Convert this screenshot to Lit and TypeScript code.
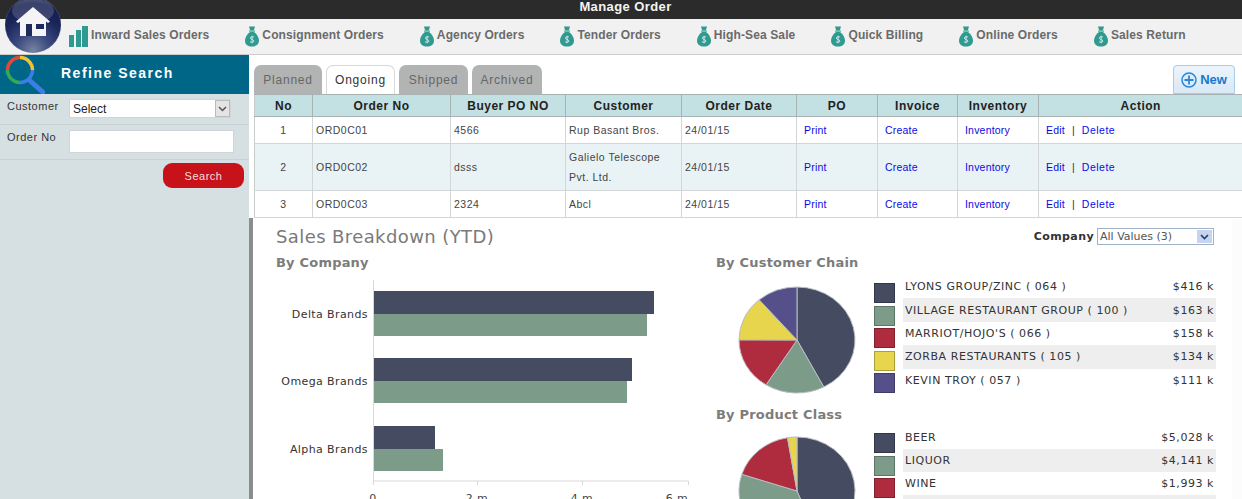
import { LitElement, html, css, svg } from "lit";
import { customElement } from "lit/decorators.js";

const COLORS = ["#454b60", "#7c9c89", "#ae2c3e", "#e8d54e", "#555089"];
const bag = html`<svg class="bag" viewBox="0 0 14 21" width="14" height="21"><path d="M4 0.5h6L8.8 4.5H5.2z" fill="#2f9a90"/><rect x="4" y="4.6" width="6" height="1" fill="#2f9a90"/><path d="M5 6C2 8 0 11.500 0 14.500 0 18.500 3 20.500 7 20.500S14 18.500 14 14.500C14 11.500 12 8 9 6z" fill="#2f9a90"/><path d="M9 11.200C8.200 10.500 5.500 10.400 5.400 12 5.300 13.700 8.900 13.300 8.900 15.100 8.900 16.600 6 16.600 5 15.700M7.100 9.800V17.200" fill="none" stroke="#e8f4f2" stroke-width=".8"/></svg>`;
const bars = html`<svg class="bars" viewBox="0 0 19 21" width="19" height="21"><rect x="0" y="9" width="5" height="12" fill="#2f9a90"/><rect x="7" y="4" width="5" height="17" fill="#2f9a90"/><rect x="13" y="0" width="6" height="21" fill="#2f9a90"/></svg>`;

function pie(values: number[], rx: number, ry: number) {
  const total = values.reduce((a, b) => a + b, 0);
  let acc = 0;
  const w = rx * 2 + 4, h = ry * 2 + 4, cx = rx + 2, cy = ry + 2;
  const slices = values.map((v, i) => {
    const a0 = (acc / total) * 2 * Math.PI;
    acc += v;
    const a1 = (acc / total) * 2 * Math.PI;
    const p = (a: number) => `${(cx + Math.sin(a) * rx).toFixed(2)} ${(cy - Math.cos(a) * ry).toFixed(2)}`;
    const large = a1 - a0 > Math.PI ? 1 : 0;
    return svg`<path d="M${cx} ${cy}L${p(a0)}A${rx} ${ry} 0 ${large} 1 ${p(a1)}Z" fill=${COLORS[i]} stroke="#b9bcc4" stroke-width="1"/>`;
  });
  return html`<svg class="pie" width=${w} height=${h} viewBox="0 0 ${w} ${h}">${slices}</svg>`;
}

@customElement("app-root")
export class AppRoot extends LitElement {
  static styles = css`
    :host { display: block; height: 499px; width: 1242px; overflow: hidden; position: relative; font-family: "Liberation Sans", Arial, sans-serif; background: #fff; color: #444; }
    .top { height: 19px; background: #2b2b2b; color: #f4f4f4; font-weight: bold; font-size: 13px; line-height: 13px; text-align: center; letter-spacing: .4px; padding-left: 9px; box-sizing: border-box; }
    .home { position: absolute; left: 5px; top: -3px; width: 56px; height: 56px; border-radius: 50%; background: radial-gradient(circle at 50% 95%, #77839f 0%, #3b4a80 28%, #1a2558 58%, #141e4e 78%, #5b6486 100%); box-shadow: inset 0 0 1px #8893b8; z-index: 2; overflow: hidden; }
    .home svg { display: block; }
    .nav { height: 36px; box-sizing: border-box; background: #f1f1f1; border-bottom: 1px solid #ccc; display: flex; align-items: center; gap: 36px; padding-left: 69px; }
    .nav-item { display: flex; align-items: center; gap: 3px; font-size: 12px; font-weight: bold; color: #6a6a6a; letter-spacing: .12px; white-space: nowrap; }
    .nav-item svg { display: block; flex: none; }
    .nav-item span { padding-bottom: 4px; }
    .body { display: flex; height: 444px; }
    .side { width: 249px; flex: none; background: #d6e0e2; }
    .side-head { height: 39px; background: #006687; display: flex; padding-left: 5px; gap: 6px; color: #fff; font-size: 14px; font-weight: bold; letter-spacing: 1.5px; }
    .side-head svg { display: block; flex: none; }
    .side-head span { margin-left: 10px; line-height: 36px; }
    .row { display: flex; border-bottom: 1px solid #c9d3d5; padding-left: 7px; font-size: 11px; color: #333; letter-spacing: .5px; }
    .row label { width: 62px; flex: none; margin-top: 1px; }
    .row.cust { height: 31px; box-sizing: border-box; padding-top: 5px; }
    .row.ord { height: 35px; box-sizing: border-box; padding-top: 5px; }
    .sel { width: 162px; height: 19px; box-sizing: border-box; background: #fff; border: 1px solid #d0d4d6; display: flex; align-items: center; justify-content: space-between; font-size: 12px; color: #222; letter-spacing: 0; padding-left: 3px; }
    .sel-btn { width: 15px; height: 17px; background: #e4e4e4; border: 1px solid #bbb; box-sizing: border-box; display: flex; align-items: center; justify-content: center; }
    .inp { width: 165px; height: 23px; box-sizing: border-box; background: #fff; border: 1px solid #d0d4d6; }
    .search-wrap { display: flex; justify-content: flex-end; padding: 3px 5px 0 0; }
    .search { width: 81px; height: 25px; border-radius: 9px; background: #c8121a; color: #f6dede; font-size: 11px; letter-spacing: .5px; display: flex; align-items: center; justify-content: center; }
    .main { flex: 1; min-width: 0; }
    .tools { padding: 10px 7px 0 5px; display: flex; align-items: flex-end; height: 39px; box-sizing: border-box; }
    .tabs { display: flex; gap: 4px; flex: 1; }
    .tab { width: 69px; height: 29px; box-sizing: border-box; background: #b2b4b4; color: #666; font-size: 12px; letter-spacing: .8px; border-radius: 7px 7px 0 0; display: flex; align-items: center; justify-content: center; }
    .tab:first-child { width: 68px; }
    .tab:last-child { width: 70px; }
    .tab.on { background: #fff; color: #333; border: 1px solid #d8d8d8; border-bottom: none; }
    .new { width: 62px; height: 29px; box-sizing: border-box; border: 1px solid #a9cbe6; border-radius: 4px 4px 0 0; background: linear-gradient(#ecf4fb, #d8e8f6); color: #1877d0; font-weight: bold; font-size: 13px; display: flex; align-items: center; justify-content: center; gap: 3px; }
    .tw { padding-left: 5px; }
    table { border-collapse: collapse; table-layout: fixed; width: 988px; font-size: 10.500px; letter-spacing: .5px; color: #444; }
    th { background: #c3e0e2; color: #222; font-size: 12px; height: 21px; padding: 0; border: 1px solid #a9b2b3; font-weight: bold; }
    td { border: 1px solid #d3d6d6; padding: 0 3px; height: 26px; background: #fff; white-space: nowrap; }
    tr.alt td { background: #e9f3f6; height: 46px; line-height: 20px; }
    th:first-child, td:first-child { border-left-color: #c8cccc; }
    th:last-child, td:last-child { border-right: none; }
    td.c { text-align: center; }
    td.l { padding-left: 7px; color: #0a0ae6; letter-spacing: .2px; }
    .pipe { color: #333; margin: 0 7px; }
    .del { letter-spacing: .5px; }
    .dash { height: 281px; border-left: 4px solid #8c8c8c; padding-left: 23px; overflow: hidden; box-shadow: inset -10px 0 0 #fcfcfc; font-family: "DejaVu Sans", Verdana, sans-serif; }
    .dash-head { display: flex; align-items: center; justify-content: space-between; height: 39px; padding: 0 28px 2px 0; box-sizing: border-box; }
    .dash-title { font-size: 18px; color: #7a7a7a; letter-spacing: .4px; }
    .filter { display: flex; align-items: center; gap: 3px; font-size: 11px; font-weight: bold; color: #333; letter-spacing: .4px; }
    .fsel { width: 117px; height: 17px; box-sizing: border-box; border: 1px solid #9fb2c8; display: flex; align-items: center; justify-content: space-between; font-weight: normal; color: #555; font-size: 11px; padding-left: 2px; letter-spacing: 0; }
    .fbtn { width: 15px; height: 13px; background: #c5d5ef; margin-right: 1px; display: flex; align-items: center; justify-content: center; }
    .cols { display: flex; }
    .left { width: 440px; flex: none; }
    h3 { margin: 0; font-size: 13px; letter-spacing: .2px; font-weight: bold; color: #7c7c7c; height: 14px; line-height: 12px; white-space: nowrap; }
    .chart { display: block; margin-top: 1px; }
    .chart text { font-family: "DejaVu Sans", Verdana, sans-serif; font-size: 11px; letter-spacing: .4px; fill: #333; }
    .chart text.t { text-anchor: middle; fill: #444; }
    .chart text.n { text-anchor: end; }
    .right { flex: 1; min-width: 0; padding-right: 26px; }
    .block { display: flex; height: 138px; box-sizing: border-box; padding-top: 4px; }
    .block .pie { flex: none; margin: 10px 17px 0 21px; }
    .block.two { padding-top: 3px; height: 150px; }
    .block.two .pie { margin-top: 9px; }
    .block.two .sw { padding-top: 7px; }
    .block.two .lg div { height: 23px; }
    .sw { flex: none; width: 21px; padding-top: 8px; margin-right: 8px; display: flex; flex-direction: column; gap: 2.500px; }
    .sw i { display: block; height: 20px; box-sizing: border-box; border: 1px solid rgba(0,0,0,.25); }
    .lg { flex: 1; }
    .lg div { height: 23.400px; display: flex; align-items: center; justify-content: space-between; font-size: 11px; letter-spacing: .55px; color: #333; padding: 0 2px; }
    .lg div:nth-child(even) { background: #eeeeee; }
  `;

  legend(items: [string, string][]) {
    return html`<div class="sw">${items.map((_, i) => html`<i style="background:${COLORS[i]}"></i>`)}</div>
      <div class="lg">${items.map(([a, b]) => html`<div><span>${a}</span><span>${b}</span></div>`)}</div>`;
  }

  render() {
    const rows = [
      ["1", "ORD0C01", "4566", html`Rup Basant Bros.`, ""],
      ["2", "ORD0C02", "dsss", html`Galielo Telescope<br />Pvt. Ltd.`, "alt"],
      ["3", "ORD0C03", "2324", html`Abcl`, ""],
    ];
    const bs: [number, number, string][] = [
      [291, 280, COLORS[0]], [314, 273, COLORS[1]],
      [358, 258, COLORS[0]], [381, 253, COLORS[1]],
      [426, 61, COLORS[0]], [449, 69, COLORS[1]],
    ];
    const cust: [string, string][] = [
      ["LYONS GROUP/ZINC ( 064 )", "$416 k"],
      ["VILLAGE RESTAURANT GROUP ( 100 )", "$163 k"],
      ["MARRIOT/HOJO'S ( 066 )", "$158 k"],
      ["ZORBA RESTAURANTS ( 105 )", "$134 k"],
      ["KEVIN TROY ( 057 )", "$111 k"],
    ];
    const prod: [string, string][] = [
      ["BEER", "$5,028 k"],
      ["LIQUOR", "$4,141 k"],
      ["WINE", "$1,993 k"],
      ["", ""],
    ];
    return html`
      <div class="top">Manage Order</div>
      <div class="home">
        <svg viewBox="0 0 56 56" width="56" height="56">
          <ellipse cx="28" cy="14" rx="21" ry="12" fill="#ffffff" opacity=".16"/>
          <path d="M28 10L45 24.500 43 26 41 24.500V39H15V24.500L13 26 11 24.500z" fill="#f4f4f6"/>
          <rect x="21" y="27" width="6" height="12" fill="#1d2a5a"/>
          <rect x="31" y="27" width="8" height="5" fill="#1d2a5a"/>
        </svg>
      </div>
      <div class="nav">
        <div class="nav-item">${bars}<span>Inward Sales Orders</span></div>
        ${["Consignment Orders", "Agency Orders", "Tender Orders", "High-Sea Sale", "Quick Billing", "Online Orders", "Sales Return"].map(
          (t) => html`<div class="nav-item">${bag}<span>${t}</span></div>`
        )}
      </div>
      <div class="body">
        <div class="side">
          <div class="side-head">
            <svg width="40" height="39" viewBox="0 0 40 39">
              <path d="M23 24L40 39" stroke="#3b7fe6" stroke-width="5"/>
              <g fill="none" stroke-width="3.500">
                <path d="M2.500 15A12.500 12.500 0 0 1 15 2.500" stroke="#dc4a3c"/>
                <path d="M15 2.500A12.500 12.500 0 0 1 27.500 15" stroke="#f2c230"/>
                <path d="M27.500 15A12.500 12.500 0 0 1 15 27.500" stroke="#3b7fe6"/>
                <path d="M15 27.500A12.500 12.500 0 0 1 2.500 15" stroke="#35a853"/>
              </g>
            </svg>
            <span>Refine Search</span>
          </div>
          <div class="row cust"><label>Customer</label>
            <div class="sel">Select<div class="sel-btn"><svg width="9" height="6" viewBox="0 0 9 6"><path d="M1 1L4.500 4.500 8 1" fill="none" stroke="#555" stroke-width="1.500"/></svg></div></div>
          </div>
          <div class="row ord"><label>Order No</label><div class="inp"></div></div>
          <div class="search-wrap"><div class="search">Search</div></div>
        </div>
        <div class="main">
          <div class="tools">
            <div class="tabs">
              <div class="tab">Planned</div>
              <div class="tab on">Ongoing</div>
              <div class="tab">Shipped</div>
              <div class="tab">Archived</div>
            </div>
            <div class="new">
              <svg width="16" height="16" viewBox="0 0 16 16"><circle cx="8" cy="8" r="7" fill="#dcebf8" stroke="#2a86d8" stroke-width="1.500"/><path d="M8 3.500V12.500M3.500 8H12.500" stroke="#2a86d8" stroke-width="1.800"/></svg>New
            </div>
          </div>
          <div class="tw">
            <table>
              <colgroup>
                ${[58, 138, 115, 116, 115, 81, 80, 81, 204].map((w) => html`<col style="width:${w}px" />`)}
              </colgroup>
              <thead><tr>
                ${["No", "Order No", "Buyer PO NO", "Customer", "Order Date", "PO", "Invoice", "Inventory", "Action"].map((h) => html`<th>${h}</th>`)}
              </tr></thead>
              <tbody>
                ${rows.map((r) => html`<tr class=${r[4] as string}>
                  <td class="c">${r[0]}</td><td>${r[1]}</td><td>${r[2]}</td><td>${r[3]}</td><td>24/01/15</td>
                  <td class="l">Print</td><td class="l">Create</td><td class="l">Inventory</td>
                  <td class="l">Edit<span class="pipe">|</span><span class="del">Delete</span></td>
                </tr>`)}
              </tbody>
            </table>
          </div>
          <div class="dash">
            <div class="dash-head">
              <div class="dash-title">Sales Breakdown (YTD)</div>
              <div class="filter">Company
                <div class="fsel">All Values (3)<div class="fbtn"><svg width="9" height="6" viewBox="0 0 9 6"><path d="M1 1L4.500 4.500 8 1" fill="none" stroke="#223a7a" stroke-width="1.600"/></svg></div></div>
              </div>
            </div>
            <div class="cols">
              <div class="left">
                <h3>By Company</h3>
                <svg class="chart" width="430" height="228" viewBox="276 272 430 228">
                  <path d="M373.500 280V481H688.500M373.500 481v4M477.500 481v4M582.500 481v4M688.500 481v4" fill="none" stroke="#d8d8d8"/>
                  ${bs.map(([y, w, c], i) => svg`<rect x="374" y=${y} width=${w} height=${i % 2 ? 22 : 23} fill=${c}/>`)}
                  <text class="n" x="368" y="318">Delta Brands</text>
                  <text class="n" x="368" y="385">Omega Brands</text>
                  <text class="n" x="368" y="453">Alpha Brands</text>
                  <text class="t" x="373" y="502">0</text>
                  <text class="t" x="477" y="502">2 m</text>
                  <text class="t" x="582" y="502">4 m</text>
                  <text class="t" x="677" y="502">6 m</text>
                </svg>
              </div>
              <div class="right">
                <h3>By Customer Chain</h3>
                <div class="block">${pie([416, 163, 158, 134, 111], 58, 53)}${this.legend(cust)}</div>
                <h3>By Product Class</h3>
                <div class="block two">${pie([5028, 4141, 1993, 300], 58, 54)}${this.legend(prod)}</div>
              </div>
            </div>
          </div>
        </div>
      </div>
    `;
  }
}
